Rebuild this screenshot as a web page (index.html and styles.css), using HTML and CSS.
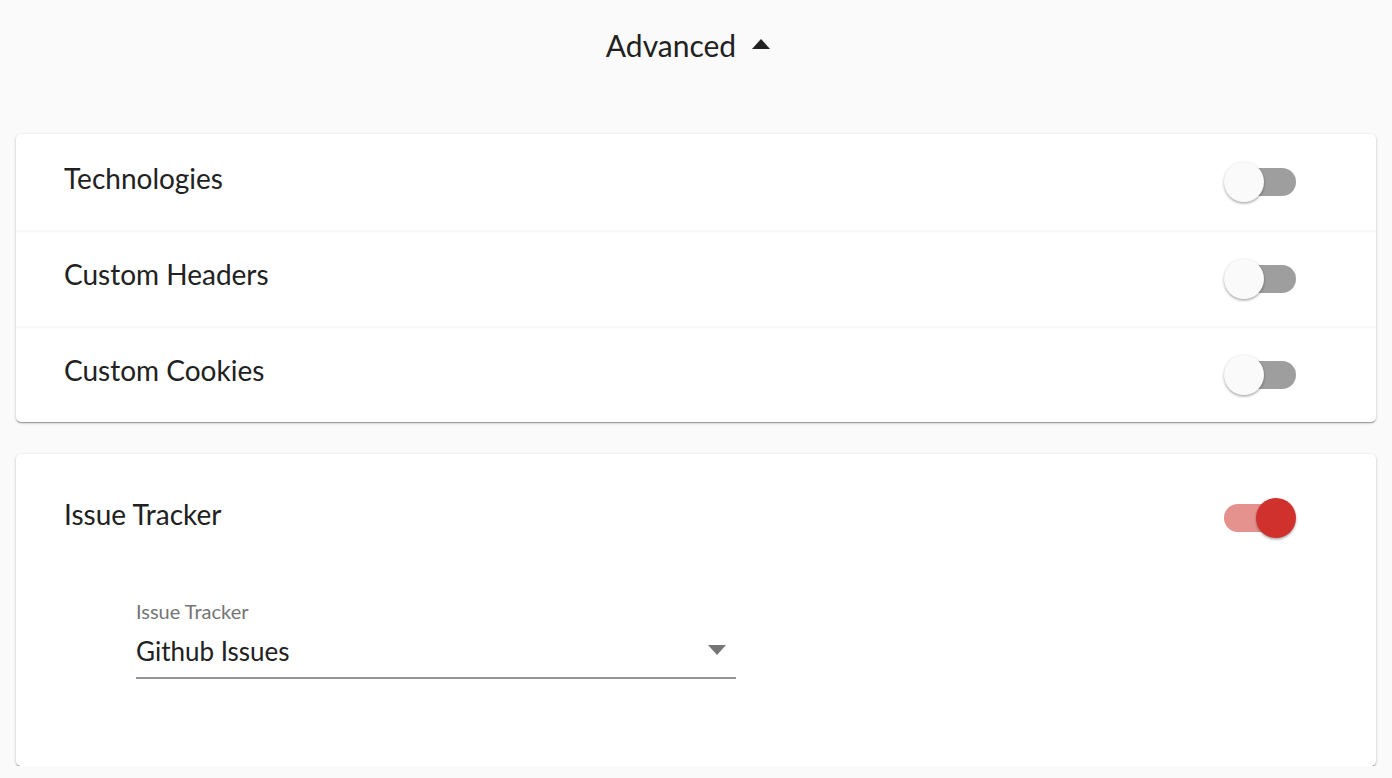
FILE: index.html
```html
<!DOCTYPE html>
<html lang="en">
<head>
<meta charset="UTF-8" />
<meta name="viewport" content="width=device-width, initial-scale=1" />
<title>Advanced settings</title>
<link rel="stylesheet" href="styles.css">
</head>
<body>

<div class="advanced">
  <span>Advanced</span>
  <svg class="caret" width="18" height="10" viewBox="0 0 18 10"><path d="M0 10 L9 0 L18 10 Z" fill="#212121"/></svg>
</div>

<div class="card">
  <div class="row">
    <span class="row-title">Technologies</span>
    <span class="switch"><span class="track"></span><span class="thumb"></span></span>
  </div>
  <div class="row">
    <span class="row-title">Custom Headers</span>
    <span class="switch"><span class="track"></span><span class="thumb"></span></span>
  </div>
  <div class="row">
    <span class="row-title">Custom Cookies</span>
    <span class="switch"><span class="track"></span><span class="thumb"></span></span>
  </div>
</div>

<div class="card tracker">
  <div class="row">
    <span class="row-title">Issue Tracker</span>
    <span class="switch on"><span class="track"></span><span class="thumb"></span></span>
  </div>
  <div class="select">
    <div class="select-label">Issue Tracker</div>
    <div class="select-value">
      <span>Github Issues</span>
      <svg width="18" height="10" viewBox="0 0 18 10"><path d="M0 0 L18 0 L9 10 Z" fill="#757575"/></svg>
    </div>
  </div>
</div>

</body>
</html>
```

FILE: styles.css
```css
body {
  margin: 0;
  padding: 0 16px;
  background: #fafafa;
  color: #212121;
  font-family: Lato, "Noto Sans", sans-serif;
}
.advanced {
  height: 90px;
  display: flex;
  align-items: center;
  justify-content: center;
  gap: 16px;
  padding-right: 16px;
  font-size: 30px;
}
.caret {
  margin-top: -2px;
}
.card {
  margin-top: 44px;
  background: #fff;
  border-radius: 5px;
  box-shadow: 0 1px 3px rgba(0,0,0,0.22), 0 1px 1px rgba(0,0,0,0.16), 0 2px 1px -1px rgba(0,0,0,0.14);
  overflow: hidden;
}
.row {
  height: 96px;
  display: flex;
  align-items: center;
  justify-content: space-between;
  padding: 0 80px 0 48px;
}
.row + .row {
  border-top: 1px solid #f7f7f7;
  box-shadow: inset 0 3px 3px -2px rgba(0,0,0,0.03);
  height: 95px;
}
.row-title {
  font-size: 28px;
  margin-top: -9px;
}
.switch {
  position: relative;
  width: 72px;
  height: 40px;
}
.track {
  position: absolute;
  left: 2px;
  right: 0;
  top: 6px;
  height: 28px;
  border-radius: 14px;
  background: #9e9e9e;
}
.thumb {
  position: absolute;
  left: 0;
  top: 0;
  width: 40px;
  height: 40px;
  border-radius: 50%;
  background: #fafafa;
  box-shadow: 0 1px 3px rgba(0,0,0,0.25), 0 2px 2px rgba(0,0,0,0.12);
}
.switch.on .track {
  left: 0;
  right: 2px;
  background: #e5918d;
}
.switch.on .thumb {
  left: 32px;
  background: #d0312d;
}
.tracker {
  margin-top: 32px;
  padding: 16px 0 87px;
}
.select {
  margin: 34px 0 0 120px;
  width: 600px;
}
.select-label {
  font-size: 20px;
  line-height: 22px;
  color: #757575;
}
.select-value {
  display: flex;
  align-items: center;
  justify-content: space-between;
  padding: 13px 10px 10px 0;
  line-height: 32px;
  font-size: 26px;
  border-bottom: 2px solid #949494;
}
.select-value svg {
  margin-top: -2px;
}
```
